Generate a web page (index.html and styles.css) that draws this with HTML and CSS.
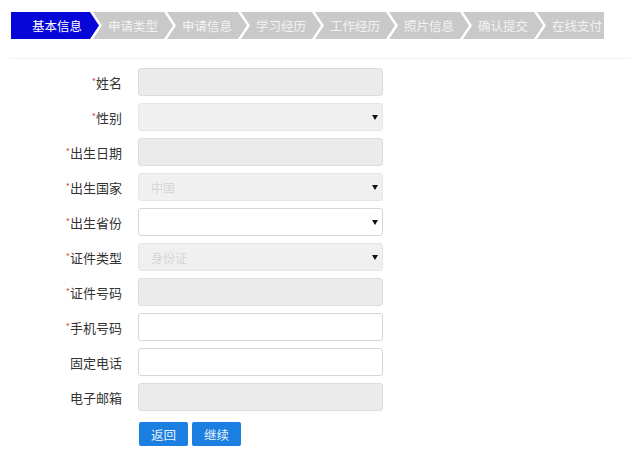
FILE: index.html
```html
<!DOCTYPE html>
<html lang="zh-CN">
<head>
    <meta charset="UTF-8">
    <title>基本信息</title>
    <link rel="stylesheet" href="styles.css">
</head>
<body>
    <!-- Steps bar -->
    <div class="steps">
        <div class="step active">基本信息</div>
        <div class="step">申请类型</div>
        <div class="step">申请信息</div>
        <div class="step">学习经历</div>
        <div class="step">工作经历</div>
        <div class="step">照片信息</div>
        <div class="step">确认提交</div>
        <div class="step">在线支付</div>
    </div>
    <div class="rule"></div>

    <!-- Form -->
    <form class="form">
        <label class="label"><span class="req">*</span>姓名</label>
        <input class="field" type="text" disabled>

        <label class="label"><span class="req">*</span>性别</label>
        <div class="select-wrap"><select class="field" disabled><option></option></select></div>

        <label class="label"><span class="req">*</span>出生日期</label>
        <input class="field" type="text" disabled>

        <label class="label"><span class="req">*</span>出生国家</label>
        <div class="select-wrap"><select class="field" disabled><option>中国</option></select></div>

        <label class="label"><span class="req">*</span>出生省份</label>
        <div class="select-wrap"><select class="field"><option></option></select></div>

        <label class="label"><span class="req">*</span>证件类型</label>
        <div class="select-wrap"><select class="field" disabled><option>身份证</option></select></div>

        <label class="label"><span class="req">*</span>证件号码</label>
        <input class="field" type="text" disabled>

        <label class="label"><span class="req">*</span>手机号码</label>
        <input class="field" type="text">

        <label class="label">固定电话</label>
        <input class="field" type="text">

        <label class="label">电子邮箱</label>
        <input class="field" type="text" disabled>

        <div></div>
        <div class="actions">
            <button type="button" class="btn">返回</button>
            <button type="button" class="btn">继续</button>
        </div>
    </form>
</body>
</html>
```

FILE: styles.css
```css
body {
    margin: 0;
    font-family: "Noto Sans CJK SC", "Liberation Sans", sans-serif;
    font-size: 13px;
    color: #333;
    background: #fff;
}
.steps {
    display: flex;
    width: 593px;
    margin: 12px 0 0 11px;
    overflow: hidden;
}
.step {
    flex: none;
    width: 80px;
    height: 27px;
    margin-left: -6px;
    line-height: 27px;
    text-align: center;
    font-size: 12.5px;
    color: #f2f2f2;
    background: #c9c9c9;
    clip-path: polygon(0 0, calc(100% - 9px) 0, 100% 50%, calc(100% - 9px) 100%, 0 100%, 9px 50%);
}
.step.active {
    width: 88px;
    margin-left: 0;
    padding-left: 4px;
    box-sizing: border-box;
    color: #fff;
    background: #0606d8;
    clip-path: polygon(0 0, calc(100% - 9px) 0, 100% 50%, calc(100% - 9px) 100%, 0 100%);
}
.rule {
    height: 1px;
    margin: 19px 10px 0 10px;
    background: #f0f0f0;
}
.form {
    display: grid;
    grid-template-columns: 122px 245px;
    column-gap: 16px;
    row-gap: 7px;
    align-items: center;
    margin-top: 9px;
}
.label {
    text-align: right;
    color: #333;
}
.req {
    color: #e04848;
    font-size: 9px;
    vertical-align: 3px;
}
.field {
    display: block;
    width: 100%;
    height: 28px;
    box-sizing: border-box;
    margin: 0;
    padding: 0 12px;
    border: 1px solid #d6d6d6;
    border-radius: 3px;
    background: #fff;
    font-family: inherit;
    font-size: 12px;
    color: #c4c4c4;
    appearance: none;
    -webkit-appearance: none;
    outline: none;
}
.field:disabled {
    background: #ebebeb;
    border-color: #dcdcdc;
}
.select-wrap {
    position: relative;
}
.select-wrap::after {
    content: "";
    position: absolute;
    right: 5px;
    top: 12px;
    border-left: 3px solid transparent;
    border-right: 3px solid transparent;
    border-top: 5px solid #111;
}
.actions {
    display: flex;
    gap: 4px;
    margin-top: 4px;
    padding-left: 1px;
}
.btn {
    width: 49px;
    height: 24px;
    border: 0;
    border-radius: 2px;
    background: #1a7fe0;
    color: #e8f2fc;
    font-family: inherit;
    font-size: 12.5px;
    padding: 0;
}
```
